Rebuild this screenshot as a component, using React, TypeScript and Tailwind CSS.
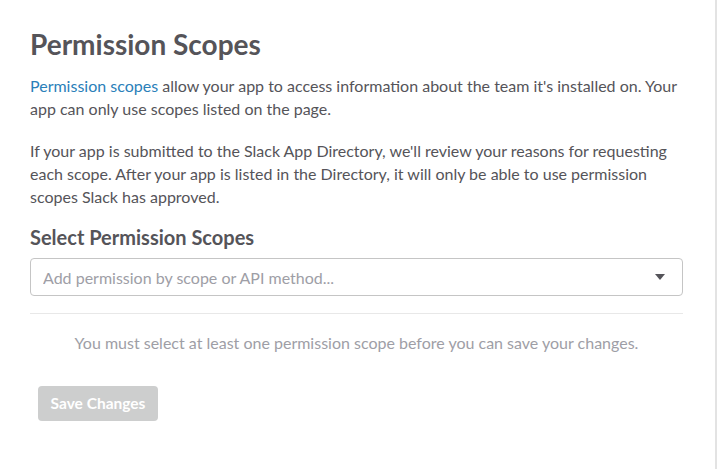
import { useState } from 'react';

export default function App() {
  const [scope, setScope] = useState('');

  return (
    <div className="w-[718px] h-[469px] bg-white overflow-hidden" style={{ fontFamily: 'Lato, "Open Sans", sans-serif' }}>
      <div className="w-[717px] h-full border-r-2 border-[#e3e3e3] pl-[30px] pr-[32px] pt-[26px]">
        {/* Header */}
        <h1 className="text-[28px] leading-[36px] font-bold text-[#555459]">Permission Scopes</h1>

        {/* Intro copy */}
        <div className="mt-[12px] text-[16px] leading-[23px] text-[#555459]">
          <p>
            <a href="#" className="text-[#2a80b9]">Permission scopes</a> allow your app to access information about the team it's installed on. Your app can only use scopes listed on the page.
          </p>
          <p className="mt-[19px]">
            If your app is submitted to the Slack App Directory, we'll review your reasons for requesting each scope. After your app is listed in the Directory, it will only be able to use permission scopes Slack has approved.
          </p>
        </div>

        {/* Scope picker */}
        <h2 className="mt-[17px] text-[20px] leading-[25px] font-bold text-[#555459]">Select Permission Scopes</h2>
        <div className="mt-[8px] relative">
          <input
            value={scope}
            onChange={(e) => setScope(e.target.value)}
            placeholder="Add permission by scope or API method..."
            className="w-full h-[38px] border border-[#c5c5c5] rounded-[4px] pl-[12px] pr-[36px] text-[16px] text-[#555459] placeholder:text-[#9e9ea6] outline-none"
          />
          <svg className="absolute right-[18px] top-[16px]" width="10" height="7" viewBox="0 0 10 7">
            <path d="M0 0h10L5 6z" fill="#555459" />
          </svg>
        </div>

        <div className="mt-[17px] border-t border-[#e8e8e8]" />

        <p className="mt-[18px] text-center text-[16px] leading-[21px] text-[#9e9ea6]">
          You must select at least one permission scope before you can save your changes.
        </p>

        <button
          disabled
          className="mt-[33px] ml-[8px] h-[35px] w-[120px] rounded-[4px] bg-[#cdcece] text-white text-[15.5px] font-bold"
        >
          Save Changes
        </button>
      </div>
    </div>
  );
}
